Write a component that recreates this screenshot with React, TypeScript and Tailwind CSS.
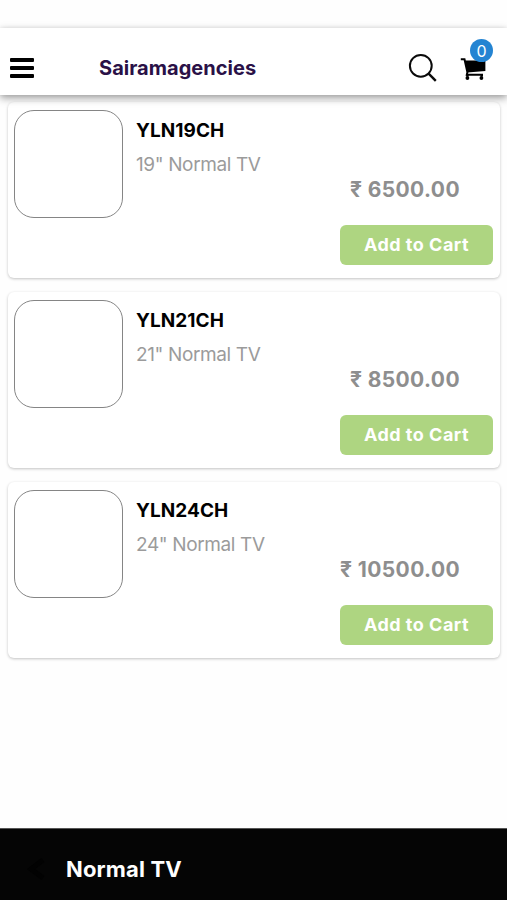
import React, { FC } from "react";

interface Product {
  code: string;
  description: string;
  price: string;
}

const products: Product[] = [
  { code: "YLN19CH", description: '19" Normal TV', price: "6500.00" },
  { code: "YLN21CH", description: '21" Normal TV', price: "8500.00" },
  { code: "YLN24CH", description: '24" Normal TV', price: "10500.00" },
];

const Header: FC = () => {
  return (
    <header className="relative z-10 mt-[28px] flex h-[67px] items-center bg-white shadow-[0_0_4px_rgba(0,0,0,0.05),0_3px_8px_rgba(0,0,0,0.38)]">
      <button aria-label="Menu" className="mt-[13px] ml-[10px] flex w-6 flex-col gap-[4px]">
        <span className="h-[4px] rounded-[1px] bg-black" />
        <span className="h-[4px] rounded-[1px] bg-black" />
        <span className="h-[4px] rounded-[1px] bg-black" />
      </button>
      <h1 className="mt-[13px] ml-[65px] text-[20px] leading-6 font-bold tracking-[0.03px] text-[#2a1147]">
        Sairamagencies
      </h1>
      <div className="mt-[13px] mr-[20px] ml-auto flex gap-[21px]">
        <button aria-label="Search">
          <svg width="30" height="30" viewBox="0 0 30 30" fill="none" stroke="#0a0a0a" strokeWidth="2">
            <circle cx="12.8" cy="12.8" r="10.9" />
            <path d="M20.6 20.6l7.2 7.2" strokeWidth="2.4" />
          </svg>
        </button>
        <button aria-label="Cart" className="relative">
          <svg width="28" height="30" viewBox="0 0 28 30">
            <path d="M6.2 7.5H26.4v10.4L8.4 19.6z" fill="#000" />
            <path d="M1.8 6.2h3.7l2.9 13-.6 2.6H24" fill="none" stroke="#000" strokeWidth="2" />
            <path d="M7.2 21.6h2.4v2H7.2zM21.6 21.6H24v2h-2.4z" fill="#000" />
            <circle cx="8.4" cy="25" r="1.9" fill="#000" />
            <circle cx="22.4" cy="25" r="1.9" fill="#000" />
          </svg>
          <span className="absolute -top-[14px] left-[11px] flex h-[23px] w-[23px] items-center justify-center rounded-full bg-[#2484d2] text-[16px] leading-none text-white">
            0
          </span>
        </button>
      </div>
    </header>
  );
};

const ProductCard: FC<{ product: Product }> = ({ product }) => {
  return (
    <div className="flex h-[176px] rounded-[6px] bg-white pt-2 pr-[7px] pl-[6px] shadow-[0_1px_3px_rgba(0,0,0,0.24)]">
      <div className="h-[108px] w-[109px] shrink-0 rounded-[20px] border border-[#858585]" />
      <div className="flex flex-1 flex-col pl-[13px]">
        <p className="mt-[9px] text-[19px] leading-6 font-bold tracking-[0.05px] text-black">{product.code}</p>
        <p className="mt-[10px] text-[19px] leading-6 tracking-[-0.38px] text-[#9b9b9b]">{product.description}</p>
        <p className="mr-[33px] self-end text-[21px] leading-[26px] font-bold tracking-[0.4px] text-[#8e8e8e]">
          ₹ {product.price}
        </p>
        <button className="mt-[22px] h-[40px] w-[153px] self-end rounded-[6px] bg-[#aed581] pb-[2px] text-[18px] font-bold tracking-[0.5px] text-white">
          Add to Cart
        </button>
      </div>
    </div>
  );
};

function App() {
  return (
    <div className="flex h-[900px] w-[507px] flex-col overflow-hidden bg-[#fefefe] font-['Inter','Liberation_Sans',sans-serif]">
      <Header />
      <main className="flex flex-1 flex-col gap-[14px] pt-[7px] pr-[7px] pl-[8px]">
        {products.map((product) => (
          <ProductCard key={product.code} product={product} />
        ))}
      </main>
      <footer className="flex h-[72px] items-center border-t border-[#555] bg-[#050505] pt-[9px] pl-[27px]">
        <svg width="18" height="24" viewBox="0 0 18 24" fill="none" stroke="#020202" strokeWidth="5">
          <path d="M16 3L4 12l12 9" />
        </svg>
        <p className="ml-[21px] text-[22px] leading-7 font-bold tracking-[0.15px] text-white">Normal TV</p>
      </footer>
    </div>
  );
}

export default App;
